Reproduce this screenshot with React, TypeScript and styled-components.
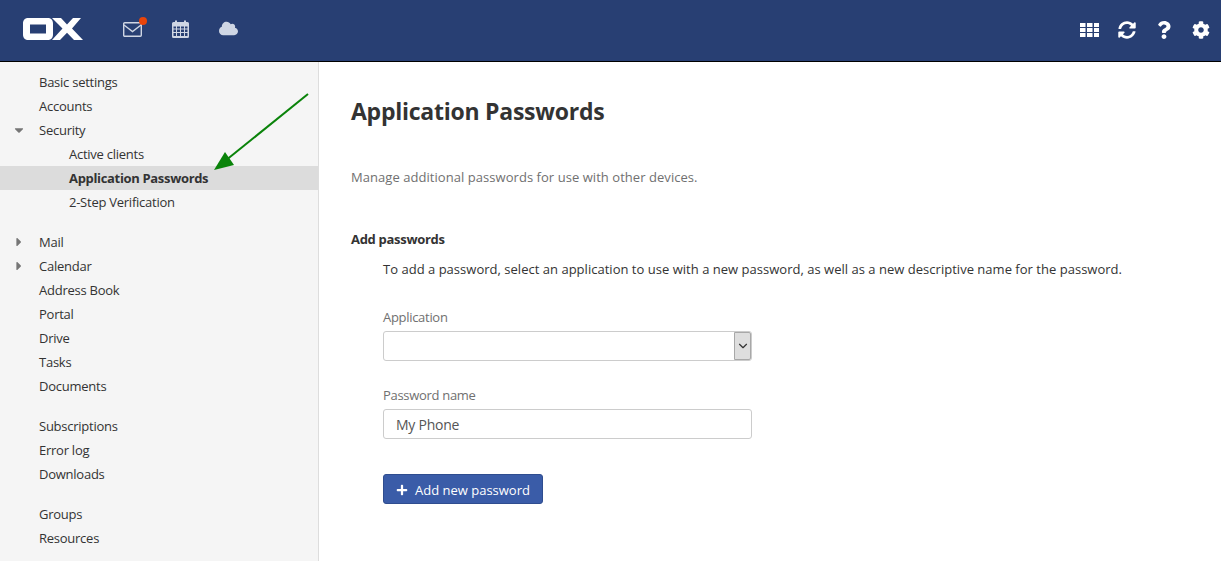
import styled, { createGlobalStyle } from 'styled-components'
import { FaCloud, FaCog, FaPlus, FaQuestion, FaSyncAlt, FaCaretDown, FaCaretRight } from 'react-icons/fa'
import { FiChevronDown } from 'react-icons/fi'

const GlobalStyle = createGlobalStyle`
  html, body {
    margin: 0;
    height: 100%;
    overflow: hidden;
    background: #fff;
    font-family: 'Open Sans', sans-serif;
    font-size: 13px;
    color: #333;
  }
  * { box-sizing: border-box; }
`

const Page = styled.div`
  position: relative;
  display: flex;
  flex-direction: column;
  height: 561px;
  width: 1221px;
  overflow: hidden;
`

const TopBar = styled.header`
  flex: none;
  height: 62px;
  display: flex;
  align-items: center;
  justify-content: space-between;
  background: #283f73;
  border-bottom: 1px solid #000;
  padding: 0 2px 3px 23px;
`

const LeftGroup = styled.div`
  display: flex;
  align-items: center;
`

const AppIcon = styled.span<{ $raise?: number }>`
  position: relative;
  display: flex;
  width: 48px;
  justify-content: center;
  padding-bottom: ${p => p.$raise ?? 0}px;
  color: #cfd6e4;
  font-size: 19px;
`

const Badge = styled.span`
  position: absolute;
  top: -5px;
  left: 31px;
  width: 8px;
  height: 8px;
  border-radius: 50%;
  background: #e8440a;
`

const Logo = styled.svg`
  width: 60px;
  height: 22px;
  margin-right: 25px;
`

const RightGroup = styled.div`
  display: flex;
  align-items: center;
  padding-top: 2px;
`

const ToolIcon = styled.span`
  display: flex;
  width: 37px;
  justify-content: center;
  color: #fff;
  font-size: 18px;
`

const Body = styled.div`
  flex: 1;
  display: flex;
  min-height: 0;
`

const Sidebar = styled.nav`
  flex: none;
  width: 319px;
  background: #f5f5f5;
  border-right: 1px solid #ddd;
  padding-top: 8px;
`

const NavGroup = styled.div`
  margin-bottom: 16px;
`

const NavRow = styled.div<{ $depth?: number; $active?: boolean }>`
  position: relative;
  height: 24px;
  line-height: 24px;
  padding-left: ${p => (p.$depth ? 69 : 39)}px;
  font-weight: ${p => (p.$active ? 700 : 400)};
  letter-spacing: ${p => (p.$active ? -0.33 : -0.25)}px;
  background: ${p => (p.$active ? '#dcdcdc' : 'transparent')};
  color: #333;
`

const Caret = styled.span`
  position: absolute;
  left: 12px;
  top: 0;
  width: 14px;
  height: 24px;
  display: flex;
  align-items: center;
  justify-content: center;
  color: #767676;
  font-size: 14px;
`

const Main = styled.main`
  flex: 1;
  padding: 33px 32px 0;
`

const Title = styled.h1`
  margin: 0;
  height: 32px;
  line-height: 32px;
  font-size: 23px;
  font-weight: 700;
  letter-spacing: -0.25px;
  color: #333;
`

const Description = styled.p`
  margin: 40px 0 0;
  line-height: 20px;
  letter-spacing: 0.05px;
  color: #707070;
`

const SectionTitle = styled.h2`
  margin: 42px 0 0;
  line-height: 20px;
  font-size: 13px;
  font-weight: 700;
  letter-spacing: -0.3px;
  color: #333;
`

const Section = styled.section`
  padding-left: 32px;
`

const Intro = styled.p`
  margin: 10px 0 28px;
  line-height: 20px;
  letter-spacing: 0.02px;
  color: #333;
`

const Field = styled.div`
  width: 369px;
  & + & {
    margin-top: 24px;
  }
`

const Label = styled.label`
  display: block;
  line-height: 20px;
  margin-bottom: 4px;
  letter-spacing: -0.3px;
  color: #707070;
`

const SelectBox = styled.div`
  display: flex;
  justify-content: flex-end;
  height: 30px;
  background: #fff;
  border: 1px solid #ccc;
  border-radius: 3px;
`

const SelectArrow = styled.span`
  width: 17px;
  display: flex;
  align-items: center;
  justify-content: center;
  background: #dedede;
  border: 1px solid #a8a8a8;
  border-radius: 0 2px 2px 0;
  color: #333;
  font-size: 14px;
`

const TextBox = styled.div`
  height: 30px;
  line-height: 30px;
  padding: 0 12px;
  background: #fff;
  border: 1px solid #ccc;
  border-radius: 3px;
  font-size: 14px;
  letter-spacing: -0.25px;
  color: #555;
`

const AddButton = styled.button`
  display: flex;
  align-items: center;
  gap: 7px;
  height: 30px;
  margin-top: 35px;
  padding: 1px 12px 0;
  background: #3a5ca8;
  border: 1px solid #2f4d8f;
  border-radius: 3px;
  color: #fff;
  font-family: inherit;
  font-size: 13px;
`

const ArrowOverlay = styled.svg`
  position: absolute;
  left: 205px;
  top: 85px;
  width: 110px;
  height: 95px;
  pointer-events: none;
`

type NavItem = { label: string; depth?: number; active?: boolean; caret?: 'open' | 'closed' }

const navGroups: NavItem[][] = [
  [
    { label: 'Basic settings' },
    { label: 'Accounts' },
    { label: 'Security', caret: 'open' },
    { label: 'Active clients', depth: 1 },
    { label: 'Application Passwords', depth: 1, active: true },
    { label: '2-Step Verification', depth: 1 },
  ],
  [
    { label: 'Mail', caret: 'closed' },
    { label: 'Calendar', caret: 'closed' },
    { label: 'Address Book' },
    { label: 'Portal' },
    { label: 'Drive' },
    { label: 'Tasks' },
    { label: 'Documents' },
  ],
  [{ label: 'Subscriptions' }, { label: 'Error log' }, { label: 'Downloads' }],
  [{ label: 'Groups' }, { label: 'Resources' }],
]

const MailIcon = () => (
  <svg width='19' height='15' viewBox='0 0 19 15' fill='none' stroke='currentColor' strokeWidth='1.4'>
    <rect x='0.7' y='0.7' width='17.6' height='13.6' rx='1' />
    <path d='M1 3l8.500 6.500L18 3' />
  </svg>
)

const CalendarIcon = () => (
  <svg width='17' height='18' viewBox='0 0 17 18' fill='currentColor'>
    <path
      fillRule='evenodd'
      d='M1.500 2H3V0.500h2V2h7V0.500h2V2h1.500A1.500 1.500 0 0 1 17 3.500v13a1.500 1.500 0 0 1-1.500 1.500h-14A1.500 1.500 0 0 1 0 16.500v-13A1.500 1.500 0 0 1 1.500 2zM1.500 6.500v2h2.500v-2zM5 6.500v2h3v-2zM9 6.500v2h3v-2zM13 6.500v2h2.500v-2zM1.500 9.500v2.500h2.500V9.500zM5 9.500v2.500h3V9.500zM9 9.500v2.500h3V9.500zM13 9.500v2.500h2.500V9.500zM1.500 13v3h2.500v-3zM5 13v3h3v-3zM9 13v3h3v-3zM13 13v3h2.500v-3z'
    />
  </svg>
)

const GridIcon = () => (
  <svg width='19' height='14' viewBox='0 0 19 14' fill='currentColor'>
    {[0, 5, 10].map(y =>
      [0, 7, 14].map(x => <rect key={`${x}-${y}`} x={x} y={y} width='5.500' height='4' />),
    )}
  </svg>
)

export default function App() {
  return (
    <Page>
      <GlobalStyle />
      <TopBar>
        <LeftGroup>
          <Logo viewBox='0 1 60 20' preserveAspectRatio='none' aria-label='OX'>
            <path
              fill='#fff'
              fillRule='evenodd'
              d='M5 1h20c3 0 5 2 5 5v10c0 3-2 5-5 5H5c-3 0-5-2-5-5V6c0-3 2-5 5-5zm2 6v8h16V7z'
            />
            <path fill='#fff' d='M29 1h9l6 6 6-6h8l-9 9.500L60 21h-9l-7-6.500-7 6.500h-8l10.500-10.500z' />
          </Logo>
          <AppIcon>
            <MailIcon />
            <Badge />
          </AppIcon>
          <AppIcon $raise={1}>
            <CalendarIcon />
          </AppIcon>
          <AppIcon $raise={2}>
            <FaCloud />
          </AppIcon>
        </LeftGroup>
        <RightGroup>
          <ToolIcon>
            <GridIcon />
          </ToolIcon>
          <ToolIcon>
            <FaSyncAlt />
          </ToolIcon>
          <ToolIcon>
            <FaQuestion />
          </ToolIcon>
          <ToolIcon>
            <FaCog />
          </ToolIcon>
        </RightGroup>
      </TopBar>
      <Body>
        <Sidebar>
          {navGroups.map((group, i) => (
            <NavGroup key={i}>
              {group.map(item => (
                <NavRow key={item.label} $depth={item.depth} $active={item.active}>
                  {item.caret && <Caret>{item.caret === 'open' ? <FaCaretDown /> : <FaCaretRight />}</Caret>}
                  {item.label}
                </NavRow>
              ))}
            </NavGroup>
          ))}
        </Sidebar>
        <Main>
          <Title>Application Passwords</Title>
          <Description>Manage additional passwords for use with other devices.</Description>
          <SectionTitle>Add passwords</SectionTitle>
          <Section>
            <Intro>
              To add a password, select an application to use with a new password, as well as a new descriptive name for
              the password.
            </Intro>
            <Field>
              <Label>Application</Label>
              <SelectBox>
                <SelectArrow>
                  <FiChevronDown />
                </SelectArrow>
              </SelectBox>
            </Field>
            <Field>
              <Label>Password name</Label>
              <TextBox>My Phone</TextBox>
            </Field>
            <AddButton>
              <FaPlus size={12} />
              Add new password
            </AddButton>
          </Section>
        </Main>
      </Body>
      <ArrowOverlay viewBox='0 0 110 95'>
        <line x1='103' y1='9' x2='20' y2='76' stroke='#0a830a' strokeWidth='2' />
        <polygon points='9,85 20,67 29,80' fill='#0a830a' />
      </ArrowOverlay>
    </Page>
  )
}
